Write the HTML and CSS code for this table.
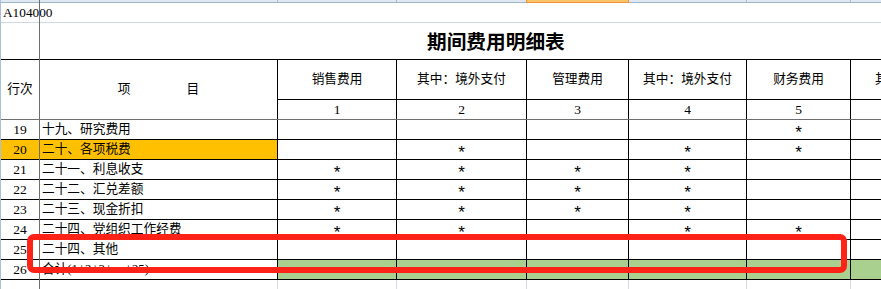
FILE: index.html
```html
<!DOCTYPE html>
<html lang="zh-CN">
<head>
<meta charset="utf-8">
<title>期间费用明细表</title>
<link rel="stylesheet" href="styles.css">
</head>
<body>
<div class="sheet">
  <div class="colhead">
    <div class="ch"></div><div class="ch"></div><div class="ch"></div><div class="ch"></div>
    <div class="ch sel"></div><div class="ch"></div><div class="ch"></div><div class="ch"></div>
  </div>
  <div class="code">A104000</div>
  <div class="title">期间费用明细表</div>
  <div class="table">
    <div class="cell span2">行次</div>
    <div class="cell span2"><span class="xm">项</span><span class="xm">目</span></div>
    <div class="cell">销售费用</div>
    <div class="cell">其中：境外支付</div>
    <div class="cell">管理费用</div>
    <div class="cell">其中：境外支付</div>
    <div class="cell">财务费用</div>
    <div class="cell">其中：境外支付</div>
    <div class="cell num">1</div><div class="cell num">2</div><div class="cell num">3</div><div class="cell num">4</div><div class="cell num">5</div><div class="cell"></div>

    <div class="cell num">19</div><div class="cell label">十九、研究费用</div>
    <div class="cell"></div><div class="cell"></div><div class="cell"></div><div class="cell"></div><div class="cell star"><span class="mark">*</span></div><div class="cell"></div>

    <div class="cell num orange">20</div><div class="cell label orange">二十、各项税费</div>
    <div class="cell"></div><div class="cell star"><span class="mark">*</span></div><div class="cell"></div><div class="cell star"><span class="mark">*</span></div><div class="cell star"><span class="mark">*</span></div><div class="cell"></div>

    <div class="cell num">21</div><div class="cell label">二十一、利息收支</div>
    <div class="cell star"><span class="mark">*</span></div><div class="cell star"><span class="mark">*</span></div><div class="cell star"><span class="mark">*</span></div><div class="cell star"><span class="mark">*</span></div><div class="cell"></div><div class="cell"></div>

    <div class="cell num">22</div><div class="cell label">二十二、汇兑差额</div>
    <div class="cell star"><span class="mark">*</span></div><div class="cell star"><span class="mark">*</span></div><div class="cell star"><span class="mark">*</span></div><div class="cell star"><span class="mark">*</span></div><div class="cell"></div><div class="cell"></div>

    <div class="cell num">23</div><div class="cell label">二十三、现金折扣</div>
    <div class="cell star"><span class="mark">*</span></div><div class="cell star"><span class="mark">*</span></div><div class="cell star"><span class="mark">*</span></div><div class="cell star"><span class="mark">*</span></div><div class="cell"></div><div class="cell"></div>

    <div class="cell num">24</div><div class="cell label">二十四、党组织工作经费</div>
    <div class="cell star"><span class="mark">*</span></div><div class="cell star"><span class="mark">*</span></div><div class="cell"></div><div class="cell star"><span class="mark">*</span></div><div class="cell star"><span class="mark">*</span></div><div class="cell"></div>

    <div class="cell num">25</div><div class="cell label">二十四、其他</div>
    <div class="cell"></div><div class="cell"></div><div class="cell"></div><div class="cell"></div><div class="cell"></div><div class="cell"></div>

    <div class="cell num">26</div><div class="cell label">合计(1+2+3+…+25)</div>
    <div class="cell green"></div><div class="cell green"></div><div class="cell green"></div><div class="cell green"></div><div class="cell green"></div><div class="cell green"></div>
  </div>
  <div class="filler">
    <div class="fc"></div><div class="fc"></div><div class="fc"></div><div class="fc"></div>
    <div class="fc"></div><div class="fc"></div><div class="fc"></div><div class="fc"></div>
  </div>
  <div class="freeze-v"></div>
  <div class="freeze-h"></div>
  <div class="highlight"></div>
</div>
</body>
</html>
```
FILE: styles.css
```css
html, body {
  margin: 0;
  padding: 0;
  background: #fff;
  overflow: hidden;
}

.sheet {
  position: relative;
  width: 881px;
  height: 289px;
  overflow: hidden;
  box-sizing: border-box;
  border-left: 1px solid #a9c0de;
  font-family: "Liberation Serif", "Noto Sans CJK SC", sans-serif;
  font-size: 12.7px;
  color: #000;
}

.colhead,
.table,
.filler {
  display: grid;
  grid-template-columns: 39px 238px 119px 130px 102px 118px 104px 138px;
  width: 888px;
}

.colhead {
  height: 3px;
}

.ch {
  box-sizing: border-box;
  background: #dfe7f1;
  border-right: 1px solid #aabdd6;
  border-bottom: 1px solid #9eb6ce;
}

.ch.sel {
  background: #f9c46a;
  border-right-color: #f29436;
  border-bottom-color: #f29436;
  box-shadow: -1px 0 0 #f29436;
}

.code {
  box-sizing: border-box;
  height: 20px;
  line-height: 19px;
  padding-left: 2px;
  border-bottom: 1px solid #d0d8e6;
  font-size: 13.3px;
  white-space: nowrap;
}

.title {
  box-sizing: border-box;
  height: 37px;
  line-height: 36px;
  padding-left: 426px;
  border-bottom: 1px solid #000;
  font-family: "Noto Sans CJK SC", sans-serif;
  font-weight: 700;
  font-size: 19.7px;
  white-space: nowrap;
}

.table {
  grid-template-rows: 40px repeat(9, 20px);
}

.cell {
  box-sizing: border-box;
  border-right: 1px solid #000;
  border-bottom: 1px solid #000;
  display: flex;
  align-items: center;
  justify-content: center;
  white-space: nowrap;
  overflow: hidden;
  line-height: 1;
}

.num {
  font-size: 13.5px;
  padding-top: 1px;
}

.span2 {
  grid-row: span 2;
  gap: 56px;
}

.label {
  justify-content: flex-start;
  padding-left: 2px;
}

.star {
  overflow: visible;
  align-items: flex-start;
}

.mark {
  font-family: "Liberation Mono", monospace;
  font-size: 17px;
  line-height: 17px;
  margin-top: 5px;
}

.orange {
  background: #ffc000;
}

.green {
  background: #a9d08e;
}

.filler {
  height: 10px;
}

.fc {
  border-right: 1px solid #d5dce8;
}

.freeze-v {
  position: absolute;
  left: 38px;
  top: 0;
  width: 1px;
  height: 289px;
  background: #6e6e6e;
}

.freeze-h {
  position: absolute;
  left: 0;
  top: 119px;
  width: 881px;
  height: 1px;
  background: #6e6e6e;
}

.highlight {
  position: absolute;
  left: 26px;
  top: 234px;
  width: 820px;
  height: 39px;
  box-sizing: border-box;
  border: 6px solid #ff2216;
  border-radius: 7px;
}
```
